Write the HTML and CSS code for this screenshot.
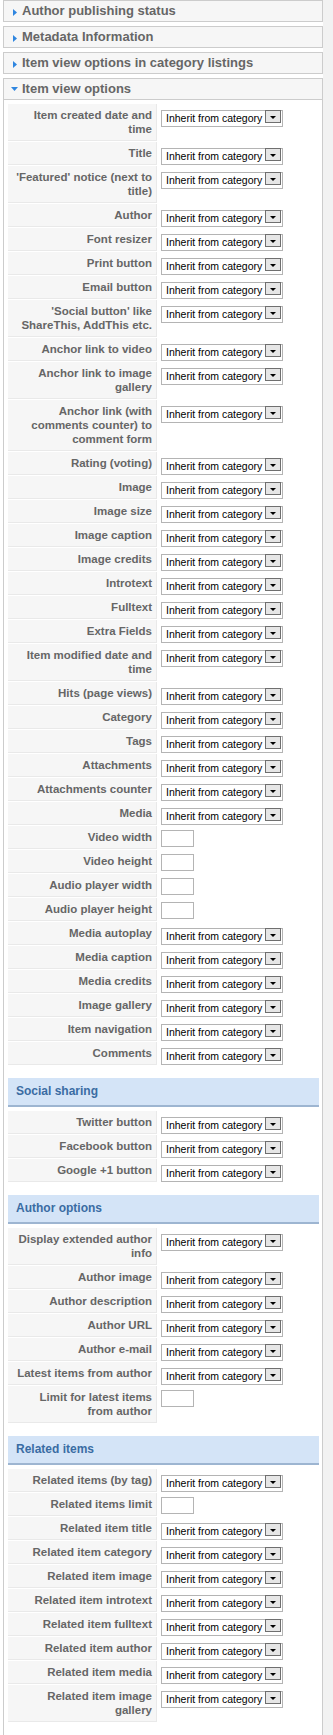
FILE: index.html
```html
<!DOCTYPE html>
<html>
<head>
    <title>Item parameters</title>
    <link rel="stylesheet" href="styles.css">
</head>
<body>
<div class="column">
<div class="sliders">
    <div class="panel">
        <h3 class="toggler"><svg class="arrow" width="11" height="20"><polygon points="2,8 6,11.5 2,15"/></svg>Author publishing status</h3>
    </div>
    <div class="panel">
        <h3 class="toggler"><svg class="arrow" width="11" height="20"><polygon points="2,8 6,11.5 2,15"/></svg>Metadata Information</h3>
    </div>
    <div class="panel">
        <h3 class="toggler"><svg class="arrow" width="11" height="20"><polygon points="2,8 6,11.5 2,15"/></svg>Item view options in category listings</h3>
    </div>
    <div class="panel open">
        <h3 class="toggler"><svg class="arrow" width="11" height="20"><polygon points="0,8 7,8 3.5,12"/></svg>Item view options</h3>
        <div class="pane">
            <table class="params">
                <tr><td class="key">Item created date and time</td><td><span class="sel"><select><option>Inherit from category</option></select></span></td></tr>
                <tr><td class="key">Title</td><td><span class="sel"><select><option>Inherit from category</option></select></span></td></tr>
                <tr><td class="key">'Featured' notice (next to title)</td><td><span class="sel"><select><option>Inherit from category</option></select></span></td></tr>
                <tr><td class="key">Author</td><td><span class="sel"><select><option>Inherit from category</option></select></span></td></tr>
                <tr><td class="key">Font resizer</td><td><span class="sel"><select><option>Inherit from category</option></select></span></td></tr>
                <tr><td class="key">Print button</td><td><span class="sel"><select><option>Inherit from category</option></select></span></td></tr>
                <tr><td class="key">Email button</td><td><span class="sel"><select><option>Inherit from category</option></select></span></td></tr>
                <tr><td class="key">'Social button' like ShareThis, AddThis etc.</td><td><span class="sel"><select><option>Inherit from category</option></select></span></td></tr>
                <tr><td class="key">Anchor link to video</td><td><span class="sel"><select><option>Inherit from category</option></select></span></td></tr>
                <tr><td class="key">Anchor link to image gallery</td><td><span class="sel"><select><option>Inherit from category</option></select></span></td></tr>
                <tr><td class="key">Anchor link (with comments counter) to comment form</td><td><span class="sel"><select><option>Inherit from category</option></select></span></td></tr>
                <tr><td class="key">Rating (voting)</td><td><span class="sel"><select><option>Inherit from category</option></select></span></td></tr>
                <tr><td class="key">Image</td><td><span class="sel"><select><option>Inherit from category</option></select></span></td></tr>
                <tr><td class="key">Image size</td><td><span class="sel"><select><option>Inherit from category</option></select></span></td></tr>
                <tr><td class="key">Image caption</td><td><span class="sel"><select><option>Inherit from category</option></select></span></td></tr>
                <tr><td class="key">Image credits</td><td><span class="sel"><select><option>Inherit from category</option></select></span></td></tr>
                <tr><td class="key">Introtext</td><td><span class="sel"><select><option>Inherit from category</option></select></span></td></tr>
                <tr><td class="key">Fulltext</td><td><span class="sel"><select><option>Inherit from category</option></select></span></td></tr>
                <tr><td class="key">Extra Fields</td><td><span class="sel"><select><option>Inherit from category</option></select></span></td></tr>
                <tr><td class="key">Item modified date and time</td><td><span class="sel"><select><option>Inherit from category</option></select></span></td></tr>
                <tr><td class="key">Hits (page views)</td><td><span class="sel"><select><option>Inherit from category</option></select></span></td></tr>
                <tr><td class="key">Category</td><td><span class="sel"><select><option>Inherit from category</option></select></span></td></tr>
                <tr><td class="key">Tags</td><td><span class="sel"><select><option>Inherit from category</option></select></span></td></tr>
                <tr><td class="key">Attachments</td><td><span class="sel"><select><option>Inherit from category</option></select></span></td></tr>
                <tr><td class="key">Attachments counter</td><td><span class="sel"><select><option>Inherit from category</option></select></span></td></tr>
                <tr><td class="key">Media</td><td><span class="sel"><select><option>Inherit from category</option></select></span></td></tr>
                <tr><td class="key">Video width</td><td><input class="num" type="text"></td></tr>
                <tr><td class="key">Video height</td><td><input class="num" type="text"></td></tr>
                <tr><td class="key">Audio player width</td><td><input class="num" type="text"></td></tr>
                <tr><td class="key">Audio player height</td><td><input class="num" type="text"></td></tr>
                <tr><td class="key">Media autoplay</td><td><span class="sel"><select><option>Inherit from category</option></select></span></td></tr>
                <tr><td class="key">Media caption</td><td><span class="sel"><select><option>Inherit from category</option></select></span></td></tr>
                <tr><td class="key">Media credits</td><td><span class="sel"><select><option>Inherit from category</option></select></span></td></tr>
                <tr><td class="key">Image gallery</td><td><span class="sel"><select><option>Inherit from category</option></select></span></td></tr>
                <tr><td class="key">Item navigation</td><td><span class="sel"><select><option>Inherit from category</option></select></span></td></tr>
                <tr><td class="key">Comments</td><td><span class="sel"><select><option>Inherit from category</option></select></span></td></tr>
            </table>

            <h4 class="param-head">Social sharing</h4>
            <table class="params">
                <tr><td class="key">Twitter button</td><td><span class="sel"><select><option>Inherit from category</option></select></span></td></tr>
                <tr><td class="key">Facebook button</td><td><span class="sel"><select><option>Inherit from category</option></select></span></td></tr>
                <tr><td class="key">Google +1 button</td><td><span class="sel"><select><option>Inherit from category</option></select></span></td></tr>
            </table>

            <h4 class="param-head">Author options</h4>
            <table class="params">
                <tr><td class="key">Display extended author info</td><td><span class="sel"><select><option>Inherit from category</option></select></span></td></tr>
                <tr><td class="key">Author image</td><td><span class="sel"><select><option>Inherit from category</option></select></span></td></tr>
                <tr><td class="key">Author description</td><td><span class="sel"><select><option>Inherit from category</option></select></span></td></tr>
                <tr><td class="key">Author URL</td><td><span class="sel"><select><option>Inherit from category</option></select></span></td></tr>
                <tr><td class="key">Author e-mail</td><td><span class="sel"><select><option>Inherit from category</option></select></span></td></tr>
                <tr><td class="key">Latest items from author</td><td><span class="sel"><select><option>Inherit from category</option></select></span></td></tr>
                <tr><td class="key">Limit for latest items from author</td><td><input class="num" type="text"></td></tr>
            </table>

            <h4 class="param-head">Related items</h4>
            <table class="params">
                <tr><td class="key">Related items (by tag)</td><td><span class="sel"><select><option>Inherit from category</option></select></span></td></tr>
                <tr><td class="key">Related items limit</td><td><input class="num" type="text"></td></tr>
                <tr><td class="key">Related item title</td><td><span class="sel"><select><option>Inherit from category</option></select></span></td></tr>
                <tr><td class="key">Related item category</td><td><span class="sel"><select><option>Inherit from category</option></select></span></td></tr>
                <tr><td class="key">Related item image</td><td><span class="sel"><select><option>Inherit from category</option></select></span></td></tr>
                <tr><td class="key">Related item introtext</td><td><span class="sel"><select><option>Inherit from category</option></select></span></td></tr>
                <tr><td class="key">Related item fulltext</td><td><span class="sel"><select><option>Inherit from category</option></select></span></td></tr>
                <tr><td class="key">Related item author</td><td><span class="sel"><select><option>Inherit from category</option></select></span></td></tr>
                <tr><td class="key">Related item media</td><td><span class="sel"><select><option>Inherit from category</option></select></span></td></tr>
                <tr><td class="key">Related item image gallery</td><td><span class="sel"><select><option>Inherit from category</option></select></span></td></tr>
            </table>
        </div>
    </div>
</div>
</div>
</body>
</html>
```

FILE: styles.css
```css
body {
    margin: 0;
    background: #f2f2f2;
    font-family: "Liberation Sans", Arial, sans-serif;
}

.column {
    width: 323px;
    min-height: 100vh;
    background: #fff;
}

.sliders {
    width: 320px;
    margin-left: 3px;
}

.panel {
    border: 1px solid #ccc;
    margin-bottom: 4px;
    background: #fff;
}

.toggler {
    margin: 0;
    height: 20px;
    padding-left: 7px;
    background: #f6f6f6;
    color: #666;
    font-size: 13px;
    line-height: 20px;
    font-weight: bold;
    white-space: nowrap;
}

.arrow {
    display: inline-block;
    vertical-align: top;
    fill: #2f86e0;
}

.open .toggler {
    border-bottom: 1px solid #ccc;
}

.pane {
    padding: 3px 2px 20px 3px;
}

table.params {
    width: 100%;
    border-collapse: separate;
    border-spacing: 1px;
}

table.params td {
    padding: 4px 3px 0;
    vertical-align: top;
}

table.params td.key {
    width: 140px;
    padding: 4px;
    background: #f6f6f6;
    border-right: 1px solid #e9e9e9;
    border-bottom: 1px solid #e9e9e9;
    text-align: right;
    color: #666;
    font-size: 11.5px;
    line-height: 14px;
    font-weight: bold;
}

.sel {
    position: relative;
    display: inline-block;
    vertical-align: top;
}

.sel select {
    -webkit-appearance: none;
    appearance: none;
    box-sizing: border-box;
    width: 122px;
    height: 17px;
    margin: 0;
    padding: 0 0 0 4px;
    border: 1px solid #b4b4b4;
    border-radius: 0;
    background: #fff;
    color: #000;
    font-family: "Liberation Sans", Arial, sans-serif;
    font-size: 10.5px;
}

/* fake windows dropdown button */
.sel::before {
    content: "";
    position: absolute;
    top: 2px;
    right: 2px;
    width: 16px;
    height: 13px;
    box-sizing: border-box;
    border: 1px solid #6f6f6f;
    background: #e6e6e6;
}

.sel::after {
    content: "";
    position: absolute;
    top: 8px;
    right: 7px;
    border-left: 3px solid transparent;
    border-right: 3px solid transparent;
    border-top: 3px solid #000;
}

.num {
    box-sizing: border-box;
    width: 33px;
    height: 17px;
    margin: 0;
    padding: 0 2px;
    border: 1px solid #b4b4b4;
    vertical-align: top;
}

.param-head {
    margin: 12px 1px 3px;
    height: 27px;
    padding-left: 8px;
    background: #d4e4f7;
    border-bottom: 2px solid #9db5d1;
    color: #3a6ca3;
    font-size: 12px;
    line-height: 27px;
    font-weight: bold;
}
```
